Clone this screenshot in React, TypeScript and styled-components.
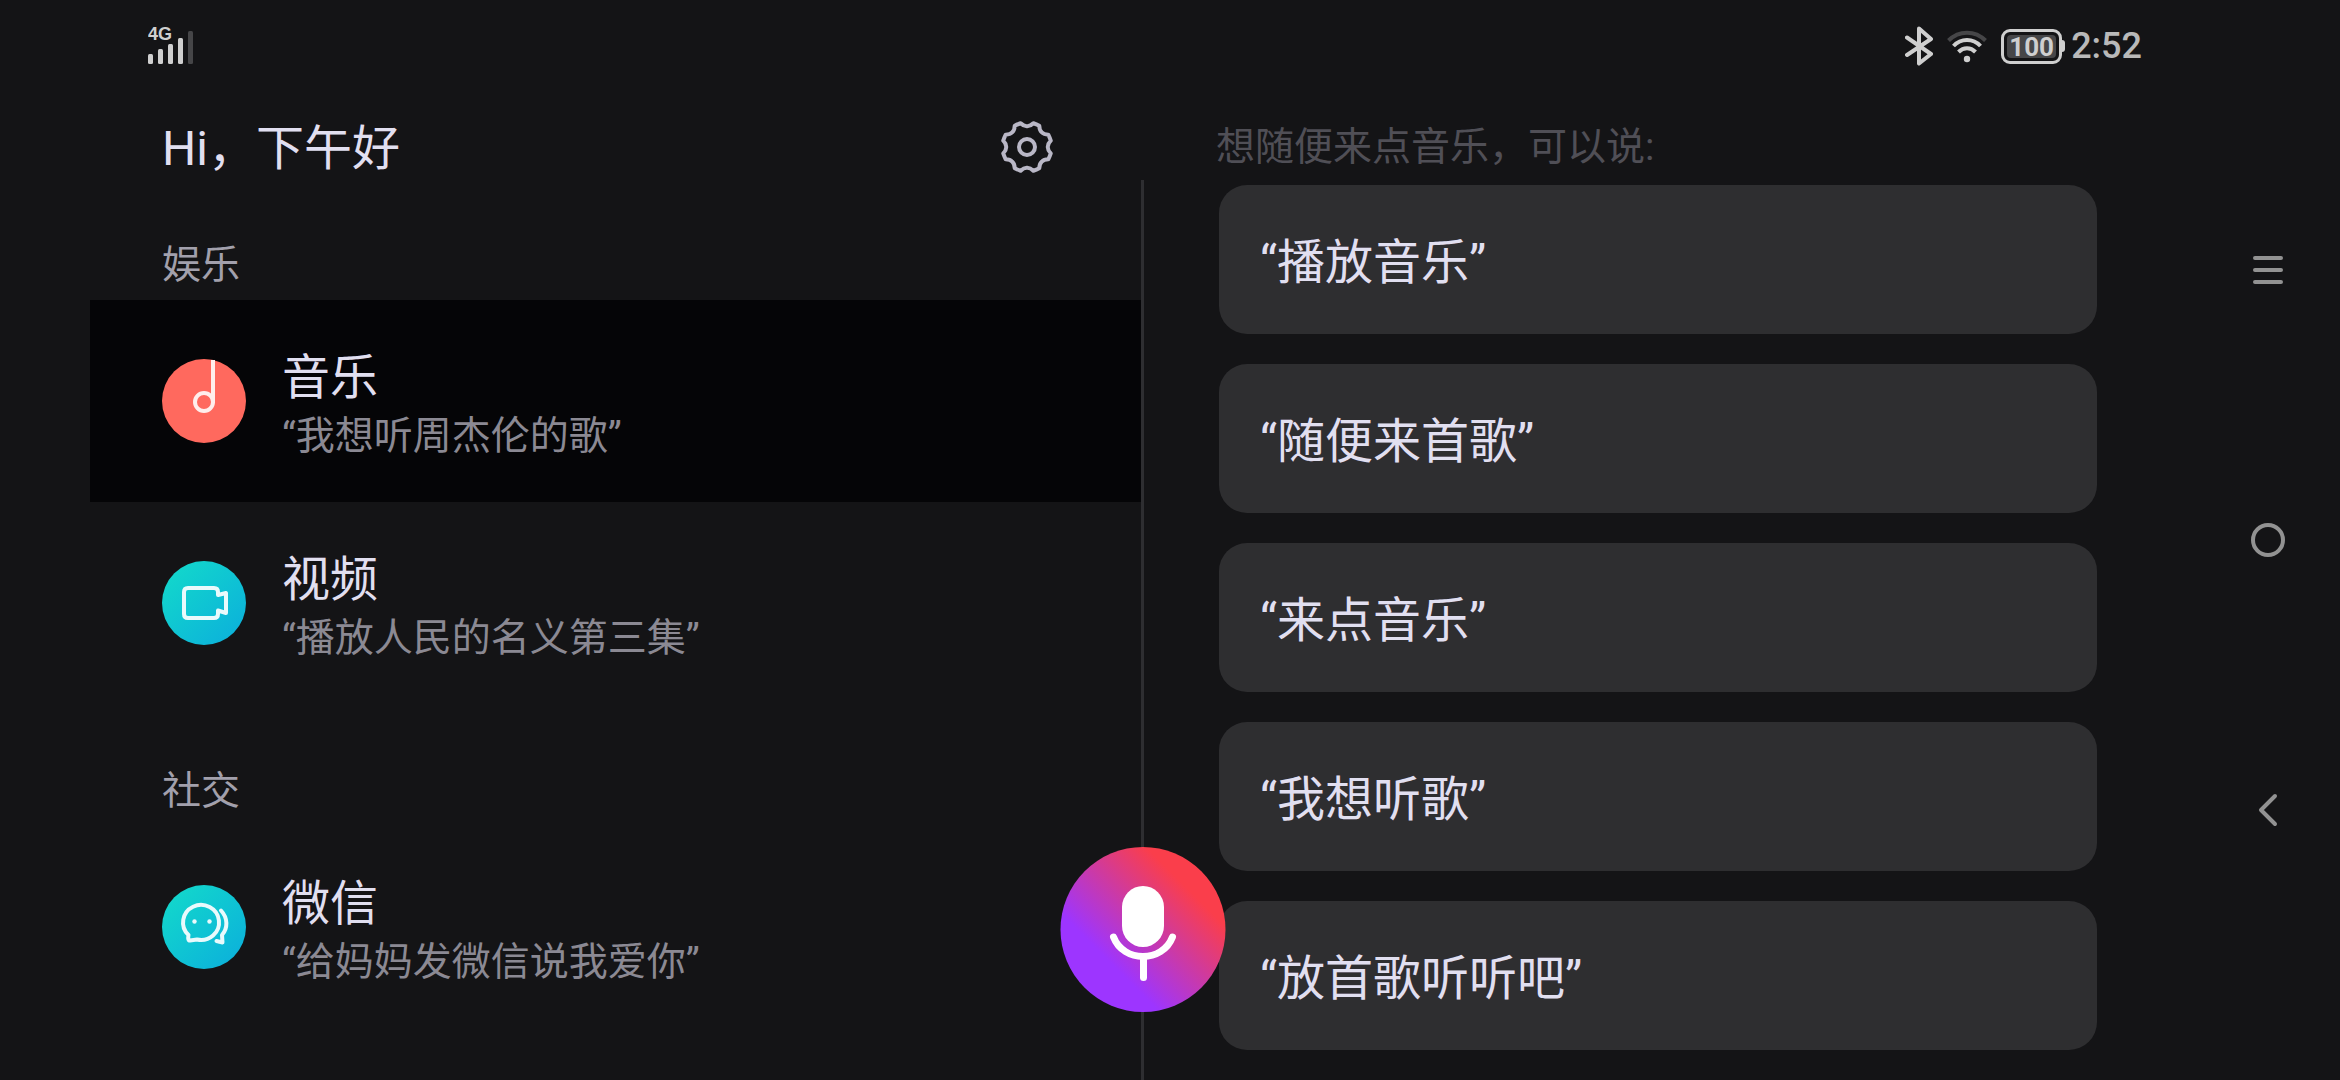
import React, { useState } from "react";
import styled, { createGlobalStyle } from "styled-components";

const color = {
  page: "#141416",
  selected: "#050507",
  card: "#2e2e30",
  line: "#2e2e31",
  title: "#e1dff0",
  section: "#a2a0ac",
  caption: "#8b8993",
  hint: "#504f56",
  nav: "#929292",
  status: "#cfcfcf",
};

const GlobalStyle = createGlobalStyle`
  *, *::before, *::after { box-sizing: border-box; }
  html, body { margin: 0; background: ${color.page}; }
  body { overflow: hidden; }
  button {
    margin: 0;
    padding: 0;
    border: 0;
    background: none;
    color: inherit;
    font: inherit;
    text-align: left;
    cursor: pointer;
  }
  h1, h2, p, ul { margin: 0; padding: 0; font-weight: 400; list-style: none; }
  svg { display: block; }
`;

const Screen = styled.div`
  display: grid;
  grid-template-columns: 1fr 145px;
  height: 100vh;
  padding-left: 90px;
  overflow: hidden;
  background: ${color.page};
  color: ${color.title};
  font-family: Roboto, "Noto Sans CJK SC", sans-serif;
`;

const AppArea = styled.div`
  display: flex;
  flex-direction: column;
  min-width: 0;
  min-height: 0;
`;

const StatusBar = styled.header`
  display: flex;
  flex: none;
  align-items: center;
  justify-content: space-between;
  height: 90px;
  padding: 2px 53px 0 58px;
`;

const StatusGroup = styled.div`
  display: flex;
  align-items: center;
  gap: 14px;
`;

const PowerAndTime = styled.div`
  display: flex;
  align-items: center;
  gap: 6px;
`;

const Battery = styled.div`
  display: flex;
  align-items: center;
`;

const BatteryBody = styled.div`
  display: flex;
  width: 61px;
  height: 35px;
  padding: 3px;
  border: 3px solid ${color.status};
  border-radius: 9px;
`;

const BatteryLevel = styled.span`
  flex: 1;
  border-radius: 4px;
  background: #464648;
  color: ${color.status};
  font-size: 26px;
  font-weight: 700;
  line-height: 24px;
  text-align: center;
`;

const BatteryTip = styled.span`
  width: 3px;
  height: 12px;
  border-radius: 0 3px 3px 0;
  background: ${color.status};
`;

const Clock = styled.time`
  color: #b9b9b9;
  font-size: 36px;
  font-weight: 500;
  line-height: 44px;
`;

const Panes = styled.div`
  display: grid;
  flex: 1;
  grid-template-columns: 1fr 3px 1fr;
  min-height: 0;
`;

const SkillPane = styled.main`
  display: flex;
  flex-direction: column;
  min-width: 0;
`;

const GreetingBar = styled.div`
  display: flex;
  flex: none;
  align-items: center;
  justify-content: space-between;
  height: 114px;
  padding: 0 87px 0 72px;
`;

const Greeting = styled.h1`
  padding-top: 4px;
  font-size: 48px;
  line-height: 60px;
`;

const IconButton = styled.button`
  display: grid;
  place-items: center;
`;

const Sections = styled.div`
  display: flex;
  flex-direction: column;
  gap: 26px;
`;

const SectionTitle = styled.h2`
  padding: 33px 72px 7px;
  color: ${color.section};
  font-size: 39px;
  line-height: 56px;
`;

const SkillButton = styled.button<{ $active: boolean }>`
  display: flex;
  align-items: center;
  gap: 36px;
  width: 100%;
  height: 202px;
  padding: 0 72px;
  background: ${(p) => (p.$active ? color.selected : "transparent")};
`;

const SkillBadge = styled.span<{ $fill: string }>`
  display: grid;
  flex: none;
  place-items: center;
  width: 84px;
  height: 84px;
  border-radius: 50%;
  background: ${(p) => p.$fill};
`;

const SkillText = styled.span`
  display: flex;
  flex-direction: column;
  padding-top: 10px;
`;

const SkillName = styled.span`
  font-size: 48px;
  line-height: 60px;
`;

const SkillExample = styled.span`
  color: ${color.caption};
  font-size: 39px;
  line-height: 56px;
`;

const Divider = styled.div`
  position: relative;
  margin-top: 90px;
  background: ${color.line};
`;

const MicButton = styled.button`
  position: absolute;
  bottom: 68px;
  left: 50%;
  display: grid;
  place-items: center;
  width: 165px;
  height: 165px;
  border-radius: 50%;
  background: linear-gradient(45deg, #9d35ff 30%, #fa3e4b 76%);
  transform: translateX(-50%);
`;

const PhrasePane = styled.aside`
  min-width: 0;
  padding: 29px 98px 0 72px;
`;

const Hint = styled.p`
  color: ${color.hint};
  font-size: 39px;
  line-height: 56px;
`;

const PhraseList = styled.ul`
  display: flex;
  flex-direction: column;
  gap: 30px;
  margin: 10px 0 0 3px;
`;

const PhraseButton = styled.button`
  display: block;
  width: 100%;
  height: 149px;
  padding: 6px 41px 0;
  border-radius: 28px;
  background: ${color.card};
  font-size: 48px;
  line-height: 60px;
`;

const SystemNav = styled.nav`
  display: grid;
  grid-template-rows: repeat(3, 1fr);
  place-items: center;
  padding: 12.5vh 0;
  color: ${color.nav};
`;

const SignalIcon = () => (
  <svg width="48" height="48" viewBox="0 0 48 48" role="img" aria-label="4G">
    <text x="0" y="18" fontFamily="Liberation Sans, sans-serif" fontSize="18" fontWeight="700" fill={color.status}>4G</text>
    <g fill={color.status}>
      <rect x="0" y="32" width="5" height="10" rx="1.5" />
      <rect x="10" y="27" width="5" height="15" rx="1.5" />
      <rect x="20" y="22" width="5" height="20" rx="1.5" />
      <rect x="30" y="16" width="5" height="26" rx="1.5" />
      <rect x="40" y="9" width="5" height="33" rx="1.5" fill="#464648" />
    </g>
  </svg>
);

const BluetoothIcon = () => (
  <svg width="28" height="40" viewBox="0 0 28 40" fill="none" stroke={color.status} strokeWidth="4" strokeLinecap="round" strokeLinejoin="round">
    <path d="M2 11.500 26 28 14 37.500V2.500L26 13 2 29" />
  </svg>
);

const WifiIcon = () => (
  <svg width="40" height="33" viewBox="0 0 40 33" fill="none" stroke={color.status} strokeWidth="4">
    <path d="M1.500 10.500C12 0 28 0 38.500 10.500" stroke="#464648" />
    <path d="M6.500 16C14 8 26 8 33.500 16" />
    <path d="M11.500 22C16.500 17 23.500 17 28.500 22" />
    <circle cx="20" cy="29" r="3.200" fill={color.status} stroke="none" />
  </svg>
);

const gearPath = (() => {
  const parts: string[] = [];
  const at = (r: number, deg: number) => {
    const a = (deg * Math.PI) / 180;
    return `${(27 + r * Math.cos(a)).toFixed(2)} ${(27 + r * Math.sin(a)).toFixed(2)}`;
  };
  for (let i = 0; i < 8; i++) {
    const c = -90 + i * 45;
    parts.push(`${i ? "L" : "M"}${at(24.6, c - 15)}`);
    parts.push(`C${at(21.5, c - 10)} ${at(20.8, c - 6)} ${at(20.8, c)}`);
    parts.push(`C${at(20.8, c + 6)} ${at(21.5, c + 10)} ${at(24.6, c + 15)}`);
    parts.push(`Q${at(24.6, c + 22.5)} ${at(24.6, c + 30)}`);
  }
  return parts.join("") + "Z";
})();

const GearIcon = () => (
  <svg width="54" height="54" viewBox="0 0 54 54" fill="none" stroke="#b9b7c6" strokeWidth="4" strokeLinejoin="round">
    <path d={gearPath} />
    <circle cx="27" cy="27" r="8" />
  </svg>
);

const NoteIcon = () => (
  <svg width="84" height="84" viewBox="0 0 84 84" fill="none" stroke="#ffeeec" strokeWidth="4">
    <circle cx="42" cy="43" r="9" />
    <path d="M51 1V44" />
  </svg>
);

const VideoIcon = () => (
  <svg width="84" height="84" viewBox="0 0 84 84" fill="none" stroke="#e9fafc" strokeWidth="4" strokeLinejoin="round">
    <path d="M26 27H52Q56 27 56 31V34L64 32V52L56 49.500V53Q56 57 52 57H26Q22 57 22 53V31Q22 27 26 27Z" />
  </svg>
);

const ChatIcon = () => (
  <svg width="84" height="84" viewBox="0 0 84 84" fill="none" stroke="#e9fafc" strokeWidth="4" strokeLinecap="round" strokeLinejoin="round">
    <path d="M26.500 50A18 17.500 0 1 1 35 54.500L28 55.500Q25.500 55.500 26.500 50Z" />
    <path d="M59 25.500C66 33 66 43 60 50L60.500 57.500L54.500 56" />
    <g fill="#e9fafc" stroke="none">
      <circle cx="32.500" cy="36.500" r="2.200" />
      <circle cx="47.500" cy="36.500" r="2.200" />
    </g>
  </svg>
);

const MicIcon = () => (
  <svg width="165" height="165" viewBox="0 0 165 165" fill="none" stroke="#fff" strokeWidth="7" strokeLinecap="round">
    <rect x="61.500" y="39" width="42" height="61" rx="21" fill="#fff" stroke="none" />
    <path d="M53 90C63 116 102 116 112 90" />
    <path d="M83 111V130.500" />
  </svg>
);

const MenuIcon = () => (
  <svg width="30" height="30" viewBox="0 0 30 30" stroke="currentColor" strokeWidth="4" strokeLinecap="round">
    <path d="M2 3H28M2 15H28M2 27H28" />
  </svg>
);

const HomeIcon = () => (
  <svg width="34" height="34" viewBox="0 0 34 34" fill="none" stroke="currentColor" strokeWidth="4">
    <circle cx="17" cy="17" r="15" />
  </svg>
);

const BackIcon = () => (
  <svg width="20" height="34" viewBox="0 0 20 34" fill="none" stroke="currentColor" strokeWidth="4" strokeLinecap="round" strokeLinejoin="round">
    <path d="M17 3 3 17 17 31" />
  </svg>
);

const coral = "#ff695e";
const teal = "linear-gradient(135deg, #12d6cc 12%, #0cb3da 88%)";

const sections = [
  {
    title: "娱乐",
    skills: [
      { name: "音乐", example: "“我想听周杰伦的歌”", fill: coral, Icon: NoteIcon },
      { name: "视频", example: "“播放人民的名义第三集”", fill: teal, Icon: VideoIcon },
    ],
  },
  {
    title: "社交",
    skills: [{ name: "微信", example: "“给妈妈发微信说我爱你”", fill: teal, Icon: ChatIcon }],
  },
];

const phrases = ["“播放音乐”", "“随便来首歌”", "“来点音乐”", "“我想听歌”", "“放首歌听听吧”"];

export default function App() {
  const [active, setActive] = useState("音乐");

  return (
    <>
      <GlobalStyle />
      <Screen>
        <AppArea>
          <StatusBar>
            <SignalIcon />
            <StatusGroup>
              <BluetoothIcon />
              <WifiIcon />
              <PowerAndTime>
                <Battery>
                  <BatteryBody>
                    <BatteryLevel>100</BatteryLevel>
                  </BatteryBody>
                  <BatteryTip />
                </Battery>
                <Clock>2:52</Clock>
              </PowerAndTime>
            </StatusGroup>
          </StatusBar>
          <Panes>
            <SkillPane>
              <GreetingBar>
                <Greeting>Hi，下午好</Greeting>
                <IconButton aria-label="设置">
                  <GearIcon />
                </IconButton>
              </GreetingBar>
              <Sections>
                {sections.map(({ title, skills }) => (
                  <section key={title}>
                    <SectionTitle>{title}</SectionTitle>
                    <ul>
                      {skills.map(({ name, example, fill, Icon }) => (
                        <li key={name}>
                          <SkillButton $active={active === name} onClick={() => setActive(name)}>
                            <SkillBadge $fill={fill}>
                              <Icon />
                            </SkillBadge>
                            <SkillText>
                              <SkillName>{name}</SkillName>
                              <SkillExample>{example}</SkillExample>
                            </SkillText>
                          </SkillButton>
                        </li>
                      ))}
                    </ul>
                  </section>
                ))}
              </Sections>
            </SkillPane>
            <Divider>
              <MicButton aria-label="语音">
                <MicIcon />
              </MicButton>
            </Divider>
            <PhrasePane>
              <Hint>想随便来点音乐，可以说:</Hint>
              <PhraseList>
                {phrases.map((phrase) => (
                  <li key={phrase}>
                    <PhraseButton>{phrase}</PhraseButton>
                  </li>
                ))}
              </PhraseList>
            </PhrasePane>
          </Panes>
        </AppArea>
        <SystemNav>
          <IconButton aria-label="菜单">
            <MenuIcon />
          </IconButton>
          <IconButton aria-label="主页">
            <HomeIcon />
          </IconButton>
          <IconButton aria-label="返回">
            <BackIcon />
          </IconButton>
        </SystemNav>
      </Screen>
    </>
  );
}
